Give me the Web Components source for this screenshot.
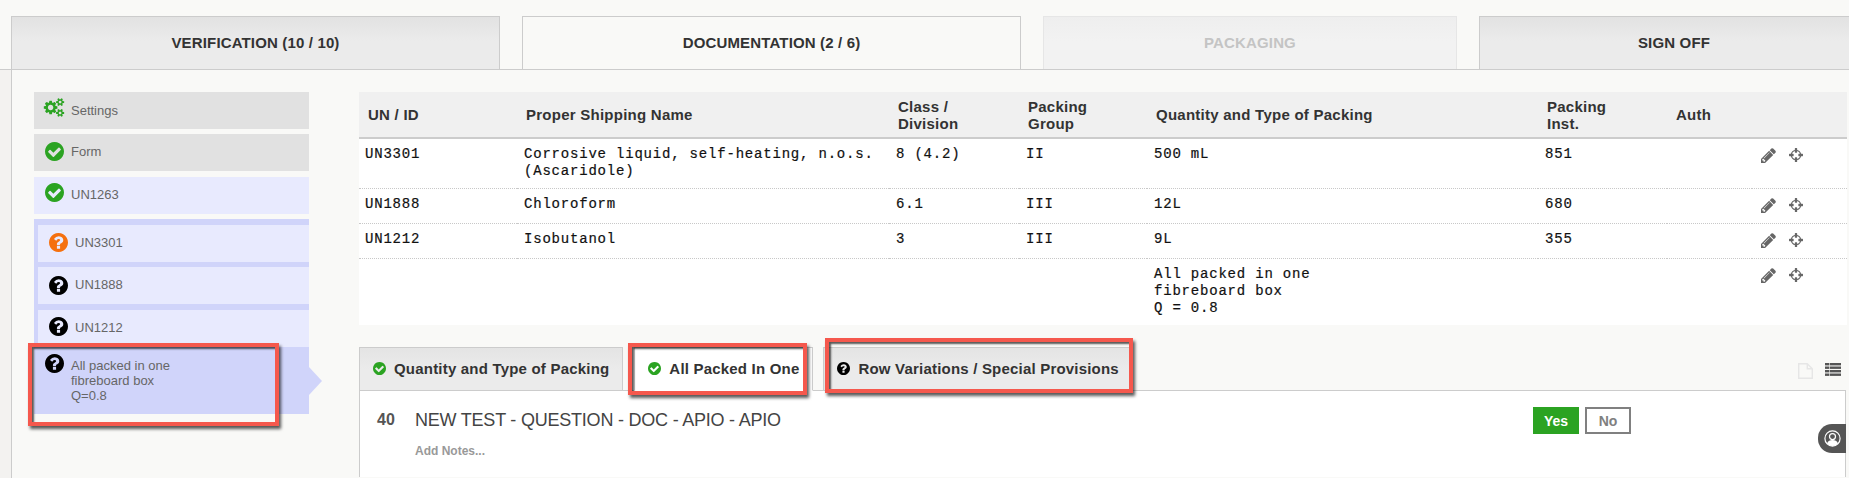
<!DOCTYPE html>
<html>
<head>
<meta charset="utf-8">
<style>
html, body { margin: 0; padding: 0; height: 478px; overflow: hidden; }
body { background: #f3f2f0; font-family: "Liberation Sans", Arial, sans-serif; position: relative; }
</style>
</head>
<body>
<step-tabs>
  <step-tab>VERIFICATION (10 / 10)</step-tab>
  <step-tab state="active">DOCUMENTATION (2 / 6)</step-tab>
  <step-tab state="disabled">PACKAGING</step-tab>
  <step-tab>SIGN OFF</step-tab>
</step-tabs>
<main-area>
  <side-nav slot="side">
    <nav-item kind="gray" icon="cogs" top="6">Settings</nav-item>
    <nav-item kind="gray" icon="check" top="8" style="margin-top:5px">Form</nav-item>
    <nav-item kind="blue" icon="check" top="6" style="margin-top:6px">UN1263</nav-item>
    <nav-group style="margin-top:5px">
      <nav-item kind="blue" icon="warn" top="8">UN3301</nav-item>
      <nav-item kind="blue" icon="help" top="9" style="margin-top:5px">UN1888</nav-item>
      <nav-item kind="blue" icon="help" top="7" style="margin-top:6px">UN1212</nav-item>
      <nav-item kind="active" icon="help" top="7">All packed in one<br>fibreboard box<br>Q=0.8</nav-item>
    </nav-group>
  </side-nav>
  <div slot="content">
    <packing-table></packing-table>
    <sub-tabs>
      <sub-tab icon="check">Quantity and Type of Packing</sub-tab>
      <sub-tab icon="check" state="active" style="margin-left:11px">All Packed In One</sub-tab>
      <sub-tab icon="help" style="margin-left:10px">Row Variations / Special Provisions</sub-tab>
    </sub-tabs>
    <question-panel num="40" text="NEW TEST - QUESTION - DOC - APIO - APIO"></question-panel>
  </div>
</main-area>

<mark-box style="left:28px;top:343px;width:251px;height:83px"></mark-box>
<mark-box style="left:628px;top:343px;width:179px;height:52px"></mark-box>
<mark-box style="left:825px;top:338px;width:308px;height:55px"></mark-box>
<help-widget></help-widget>

<script>
const ICONS = {
  check: { box: '128 128 1536 1536', d: 'M1412 734q0-28-18-46l-91-90q-19-19-45-19t-45 19l-408 407-226-226q-19-19-45-19t-45 19l-91 90q-18 18-18 46 0 27 18 45l362 362q19 19 45 19 27 0 46-19l543-543q18-18 18-45zm252 162q0 209-103 385.5t-279.5 279.5-385.5 103-385.5-103-279.5-279.5-103-385.5 103-385.5 279.5-279.5 385.5-103 385.5 103 279.5 279.5 103 385.5z' },
  help: { box: '128 128 1536 1536', d: 'M1024 1376v-192q0-14-9-23t-23-9h-192q-14 0-23 9t-9 23v192q0 14 9 23t23 9h192q14 0 23-9t9-23zm256-672q0-88-55.5-163t-138.5-116-170-41q-243 0-371 213-15 24 8 42l132 100q7 6 19 6 16 0 25-12 53-68 86-92 34-24 86-24 48 0 85.5 26t37.5 59q0 38-20 61t-68 45q-63 28-115.5 86.5t-52.5 125.5v36q0 14 9 23t23 9h192q14 0 23-9t9-23q0-19 21.5-49.5t54.5-49.5q32-18 49-28.5t46-35 44.5-48 28-60.5 12.5-81zm384 192q0 209-103 385.5t-279.5 279.5-385.5 103-385.5-103-279.5-279.5-103-385.5 103-385.5 279.5-279.5 385.5-103 385.5 103 279.5 279.5 103 385.5z' },
  cogs: { box: '0 0 2048 1792', d: 'M960 896q0-106-75-181t-181-75-181 75-75 181 75 181 181 75 181-75 75-181zm768 512q0-52-38-90t-90-38-90 38-38 90q0 53 37.5 90.5t90.5 37.5 90.5-37.5 37.5-90.5zm0-1024q0-52-38-90t-90-38-90 38-38 90q0 53 37.5 90.5t90.5 37.5 90.5-37.5 37.5-90.5zm-384 421v185q0 10-7 19.5t-16 10.5l-155 24q-11 35-32 76 34 48 90 115 7 11 7 20 0 12-7 19-23 30-82.5 89.5t-78.5 59.5q-11 0-21-7l-115-90q-37 19-77 31-11 108-23 155-7 24-30 24h-186q-11 0-20-7.5t-10-17.5l-23-153q-34-10-75-31l-118 89q-7 7-20 7-11 0-21-8-144-133-144-160 0-9 7-19 10-14 41-53t47-61q-23-44-35-82l-152-24q-10-1-17-9.5t-7-19.5v-185q0-10 7-19.5t16-10.5l155-24q11-35 32-76-34-48-90-115-7-11-7-20 0-12 7-20 22-30 82-89t79-59q11 0 21 7l115 90q34-18 77-32 11-108 23-154 7-24 30-24h186q11 0 20 7.5t10 17.5l23 153q34 10 75 31l118-89q8-7 20-7 11 0 21 8 144 133 144 160 0 8-7 19-12 16-42 54t-45 60q23 48 34 82l152 23q10 2 17 10.5t7 19.5zm640 533v140q0 16-149 31-12 27-30 52 51 113 51 138 0 4-4 7-122 71-124 71-8 0-46-47t-52-68q-20 2-30 2t-30-2q-14 21-52 68t-46 47q-2 0-124-71-4-3-4-7 0-25 51-138-18-25-30-52-149-15-149-31v-140q0-16 149-31 13-29 30-52-51-113-51-138 0-4 4-7 4-2 35-20t59-34 30-16q8 0 46 46.5t52 67.5q20-2 30-2t30 2q51-71 92-112l6-2q4 0 124 70 4 3 4 7 0 25-51 138 17 23 30 52 149 15 149 31zm0-1024v140q0 16-149 31-12 27-30 52 51 113 51 138 0 4-4 7-122 71-124 71-8 0-46-47t-52-68q-20 2-30 2t-30-2q-14 21-52 68t-46 47q-2 0-124-71-4-3-4-7 0-25 51-138-18-25-30-52-149-15-149-31v-140q0-16 149-31 13-29 30-52-51-113-51-138 0-4 4-7 4-2 35-20t59-34 30-16q8 0 46 46.5t52 67.5q20-2 30-2t30 2q51-71 92-112l6-2q4 0 124 70 4 3 4 7 0 25-51 138 17 23 30 52 149 15 149 31z' },
  pencil: { box: '128 128 1536 1536', d: 'M491 1536l91-91-235-235-91 91v107h128v128h107zm523-928q0-22-22-22-10 0-17 7l-542 542q-7 7-7 17 0 22 22 22 10 0 17-7l542-542q7-7 7-17zm-54-192l416 416-832 832h-416v-416zm683 96q0 53-37 90l-166 166-416-416 166-165q36-38 90-38 53 0 91 38l235 234q37 39 37 91z' },
  target: { box: '128 128 1536 1536', d: 'M1325 1024h-109q-26 0-45-19t-19-45v-128q0-26 19-45t45-19h109q-32-108-112.5-188.5t-188.5-112.5v109q0 26-19 45t-45 19h-128q-26 0-45-19t-19-45v-109q-108 32-188.5 112.5t-112.5 188.5h109q26 0 45 19t19 45v128q0 26-19 45t-45 19h-109q32 108 112.5 188.5t188.5 112.5v-109q0-26 19-45t45-19h128q26 0 45 19t19 45v109q108-32 188.5-112.5t112.5-188.5zm339-192v128q0 26-19 45t-45 19h-143q-37 161-154.5 278.5t-278.5 154.5v143q0 26-19 45t-45 19h-128q-26 0-45-19t-19-45v-143q-161-37-278.5-154.5t-154.5-278.5h-143q-26 0-45-19t-19-45v-128q0-26 19-45t45-19h143q37-161 154.5-278.5t278.5-154.5v-143q0-26 19-45t45-19h128q26 0 45 19t19 45v143q161 37 278.5 154.5t154.5 278.5h143q26 0 45 19t19 45z' }
}

function icon(name, w, h, color) {
  const i = ICONS[name]
  return `<svg width="${w}" height="${h}" viewBox="${i.box}" style="display:block;flex:none"><path fill="${color}" d="${i.d}"/></svg>`
}

class StepTabs extends HTMLElement {
  constructor() {
    super()
    this.attachShadow({ mode: 'open' }).innerHTML = `
    <style>
    :host{ display:flex; height:53px; padding:16px 0 0 11px; background:#f9f9f7; border-bottom:1px solid #ccc; overflow:hidden; }
    ::slotted(step-tab:nth-child(1)){ width:489px; }
    ::slotted(step-tab:nth-child(2)){ width:499px; margin-left:22px; }
    ::slotted(step-tab:nth-child(3)){ width:414px; margin-left:22px; }
    ::slotted(step-tab:nth-child(4)){ width:390px; margin-left:22px; }
    </style>
    <slot></slot>`
  }
}

class StepTab extends HTMLElement {
  constructor() {
    super()
    this.attachShadow({ mode: 'open' }).innerHTML = `
    <style>
    :host{ display:flex; flex:none; box-sizing:border-box; height:54px; align-items:center; justify-content:center;
      border:1px solid #ccc; border-bottom:0; font-size:15px; letter-spacing:.15px; font-weight:bold; color:#333; padding-bottom:3px;
      background:linear-gradient(#e2e2e2, #ebebeb 45%); }
    :host([state=active]){ background:#f9f9f7; position:relative; z-index:1; }
    :host([state=disabled]){ background:linear-gradient(#eeeeee, #f2f2f2 45%); border-color:#e6e6e6; color:#c4c4c4; }
    </style>
    <slot></slot>`
  }
}

class MainArea extends HTMLElement {
  constructor() {
    super()
    this.attachShadow({ mode: 'open' }).innerHTML = `
    <style>
    :host{ display:flex; margin-left:11px; height:408px; box-sizing:border-box; background:#f9f9f7; border-left:1px solid #ccc; padding:22px 2px 0 22px; }
    .side{ width:275px; flex:none; }
    .content{ flex:1; margin-left:50px; min-width:0; }
    </style>
    <div class="side"><slot name="side"></slot></div>
    <div class="content"><slot name="content"></slot></div>`
  }
}

class SideNav extends HTMLElement {
  constructor() {
    super()
    this.attachShadow({ mode: 'open' }).innerHTML = `<style>:host{ display:block; }</style><slot></slot>`
  }
}

class NavGroup extends HTMLElement {
  constructor() {
    super()
    this.attachShadow({ mode: 'open' }).innerHTML = `
    <style>:host{ display:block; background:#d0d4fa; padding:6px 0 0 4px; }</style><slot></slot>`
  }
}

class NavItem extends HTMLElement {
  constructor() {
    super()
    const name = this.getAttribute('icon')
    const top = this.getAttribute('top')
    const color = name == 'help' ? '#000' : name == 'warn' ? '#f5700f' : '#2ba322'
    const svg = name == 'cogs' ? icon('cogs', 22, 19, color) : icon(name == 'warn' ? 'help' : name, 19, 19, color)
    this.attachShadow({ mode: 'open' }).innerHTML = `
    <style>
    :host{ display:flex; box-sizing:border-box; height:37px; padding-left:11px; font-size:13px; line-height:15px; color:#666; }
    :host([kind=gray]){ background:#e1e1e1; }
    :host([kind=blue]){ background:#e8eafe; }
    :host([kind=active]){ background:#d0d4fa; height:67px; margin-left:-4px; position:relative; padding-top:11px; }
    :host([kind=active])::after{ content:''; position:absolute; left:100%; top:20px; border:14px solid transparent; border-left:13px solid #d0d4fa; border-right:0; }
    :host([icon=cogs]) .txt{ padding-top:11px; }
    :host([icon=cogs]) svg{ margin-left:-2px; }
    .ico{ width:26px; flex:none; }
    .ico svg{ margin-top:${top}px; }
    :host([kind=active]) .ico svg{ margin-top:-4px; }
    .txt{ padding-top:10px; }
    :host([kind=active]) .txt{ padding-top:0; }
    </style>
    <div class="ico">${svg}</div><div class="txt"><slot></slot></div>`
  }
}

const ROWS = [
  { h: 50, un: 'UN3301', name: 'Corrosive liquid, self-heating, n.o.s.<br>(Ascaridole)', cls: '8 (4.2)', grp: 'II', qty: '500 mL', inst: '851' },
  { h: 35, un: 'UN1888', name: 'Chloroform', cls: '6.1', grp: 'III', qty: '12L', inst: '680' },
  { h: 35, un: 'UN1212', name: 'Isobutanol', cls: '3', grp: 'III', qty: '9L', inst: '355' },
  { h: 66, un: '', name: '', cls: '', grp: '', qty: 'All packed in one<br>fibreboard box<br>Q = 0.8', inst: '', last: true }
]

class PackingTable extends HTMLElement {
  constructor() {
    super()
    const rows = ROWS.map(r => `
      <tr class="${r.last ? 'last' : ''}" style="height:${r.h}px">
        <td class="first">${r.un}</td><td>${r.name}</td><td>${r.cls}</td><td>${r.grp}</td><td>${r.qty}</td><td>${r.inst}</td><td></td>
        <td><div class="acts">${icon('pencil', 15, 15, '#666')}${icon('target', 14, 14, '#666')}</div></td>
      </tr>`).join('')
    this.attachShadow({ mode: 'open' }).innerHTML = `
    <style>
    :host{ display:block; background:#fff; }
    table{ width:100%; border-collapse:separate; border-spacing:0; table-layout:fixed; }
    th{ height:45px; padding:0 9px; background:#f0f0f0; border-bottom:2px solid #ccc; text-align:left; vertical-align:middle;
      font-size:15px; line-height:17px; font-weight:bold; color:#333; letter-spacing:.25px; }
    td{ padding:7px 7px 0; vertical-align:top; border-bottom:1px dotted #c8c8c8; box-sizing:border-box;
      font-family:"Liberation Mono", "Courier New", monospace; font-size:14px; letter-spacing:.8px; line-height:17px; color:#111;
      -webkit-text-stroke:.2px #111; }
    td.first{ padding-left:6px; }
    tr.last td{ border-bottom:0; }
    .acts{ display:flex; gap:13px; padding-left:2px; padding-top:2px; }
    </style>
    <table>
      <colgroup><col style="width:158px"><col style="width:372px"><col style="width:130px"><col style="width:128px"><col style="width:391px"><col style="width:129px"><col style="width:85px"><col></colgroup>
      <tr><th>UN / ID</th><th>Proper Shipping Name</th><th>Class /<br>Division</th><th>Packing<br>Group</th><th>Quantity and Type of Packing</th><th>Packing<br>Inst.</th><th>Auth</th><th></th></tr>
      ${rows}
    </table>`
  }
}

class SubTabs extends HTMLElement {
  constructor() {
    super()
    this.attachShadow({ mode: 'open' }).innerHTML = `
    <style>
    :host{ display:flex; margin-top:22px; height:43px; }
    .tools{ margin-left:auto; display:flex; gap:12px; padding:16px 6px 0 0; }
    </style>
    <slot></slot>
    <div class="tools">
      <svg width="15" height="16" viewBox="0 0 15 16"><path fill="none" stroke="#e6e6e6" stroke-width="1.4" d="M.7.7h8.6l5 5v9.6H.7zM9.3.7v5h5"/></svg>
      <svg width="16" height="13" viewBox="0 0 16 13" fill="#555"><rect width="4" height="2.4"/><rect x="4.6" width="11.4" height="2.4"/><rect y="3.5" width="4" height="2.4"/><rect x="4.6" y="3.5" width="11.4" height="2.4"/><rect y="7" width="4" height="2.4"/><rect x="4.6" y="7" width="11.4" height="2.4"/><rect y="10.5" width="4" height="2.4"/><rect x="4.6" y="10.5" width="11.4" height="2.4"/></svg>
    </div>`
  }
}

class SubTab extends HTMLElement {
  constructor() {
    super()
    const name = this.getAttribute('icon')
    this.attachShadow({ mode: 'open' }).innerHTML = `
    <style>
    :host{ display:flex; flex:none; box-sizing:border-box; height:44px; align-items:center; gap:8px; padding:0 13px 1px;
      border:1px solid #ccc; background:linear-gradient(#e4e4e4, #ebebeb 50%); position:relative;
      font-size:15px; font-weight:bold; color:#333; letter-spacing:.2px; white-space:nowrap; }
    :host([state=active]){ background:#fff; border-bottom-color:#fff; z-index:1; }
    </style>
    ${icon(name, 13, 13, name == 'check' ? '#2ba322' : '#000')}<slot></slot>`
  }
}

class QuestionPanel extends HTMLElement {
  constructor() {
    super()
    this.attachShadow({ mode: 'open' }).innerHTML = `
    <style>
    :host{ display:flex; box-sizing:border-box; height:87px; margin-right:1px; background:#fff; border:1px solid #ccc; border-bottom:0; padding:0 0 0 17px; }
    .num{ width:38px; flex:none; font-size:16px; font-weight:bold; color:#555; line-height:20px; padding-top:19px; }
    .body{ flex:1; padding-top:19px; }
    .q{ font-size:18px; line-height:20px; color:#444; letter-spacing:-.22px; }
    .notes{ margin-top:14px; font-size:12px; line-height:14px; font-weight:bold; color:#999; }
    .btns{ display:flex; gap:6px; padding:16px 214px 0 0; }
    .btn{ box-sizing:border-box; width:46px; height:27px; display:flex; align-items:center; justify-content:center; font-size:14px; font-weight:bold; }
    .yes{ background:#2ba322; color:#fff; }
    .no{ background:#fff; border:2px solid #808080; color:#808080; }
    </style>
    <div class="num">${this.getAttribute('num')}</div>
    <div class="body"><div class="q">${this.getAttribute('text')}</div><div class="notes">Add Notes...</div></div>
    <div class="btns"><div class="btn yes">Yes</div><div class="btn no">No</div></div>`
  }
}

class MarkBox extends HTMLElement {
  constructor() {
    super()
    this.attachShadow({ mode: 'open' }).innerHTML = `
    <style>
    :host{ display:block; position:absolute; box-sizing:border-box; z-index:5; border:4px solid #f5584d;
      box-shadow:2px 3px 3px rgba(0,0,0,.65), inset 2px 2px 2px rgba(0,0,0,.65); }
    </style>`
  }
}

class HelpWidget extends HTMLElement {
  constructor() {
    super()
    this.attachShadow({ mode: 'open' }).innerHTML = `
    <style>
    :host{ display:flex; position:absolute; left:1818px; top:424px; width:28px; height:29px; box-sizing:border-box; align-items:center; padding-left:6px; background:#555; border-radius:14px 0 0 14px; z-index:6; }
    </style>
    <svg width="17" height="17" viewBox="0 0 17 17"><circle cx="8.5" cy="8.5" r="7.6" fill="none" stroke="#fff" stroke-width="1.2"/><circle cx="8.5" cy="6.6" r="3" fill="none" stroke="#fff" stroke-width="1.2"/><path fill="#fff" d="M3 13.5c1-2.6 3-3.4 5.500-3.4s4.500.8 5.500 3.4c-1.400 1.500-3.400 2.400-5.500 2.400S4.400 15 3 13.500z"/></svg>`
  }
}

customElements.define('step-tabs', StepTabs)
customElements.define('step-tab', StepTab)
customElements.define('main-area', MainArea)
customElements.define('side-nav', SideNav)
customElements.define('nav-group', NavGroup)
customElements.define('nav-item', NavItem)
customElements.define('packing-table', PackingTable)
customElements.define('sub-tabs', SubTabs)
customElements.define('sub-tab', SubTab)
customElements.define('question-panel', QuestionPanel)
customElements.define('mark-box', MarkBox)
customElements.define('help-widget', HelpWidget)
</script>
</body>
</html>
